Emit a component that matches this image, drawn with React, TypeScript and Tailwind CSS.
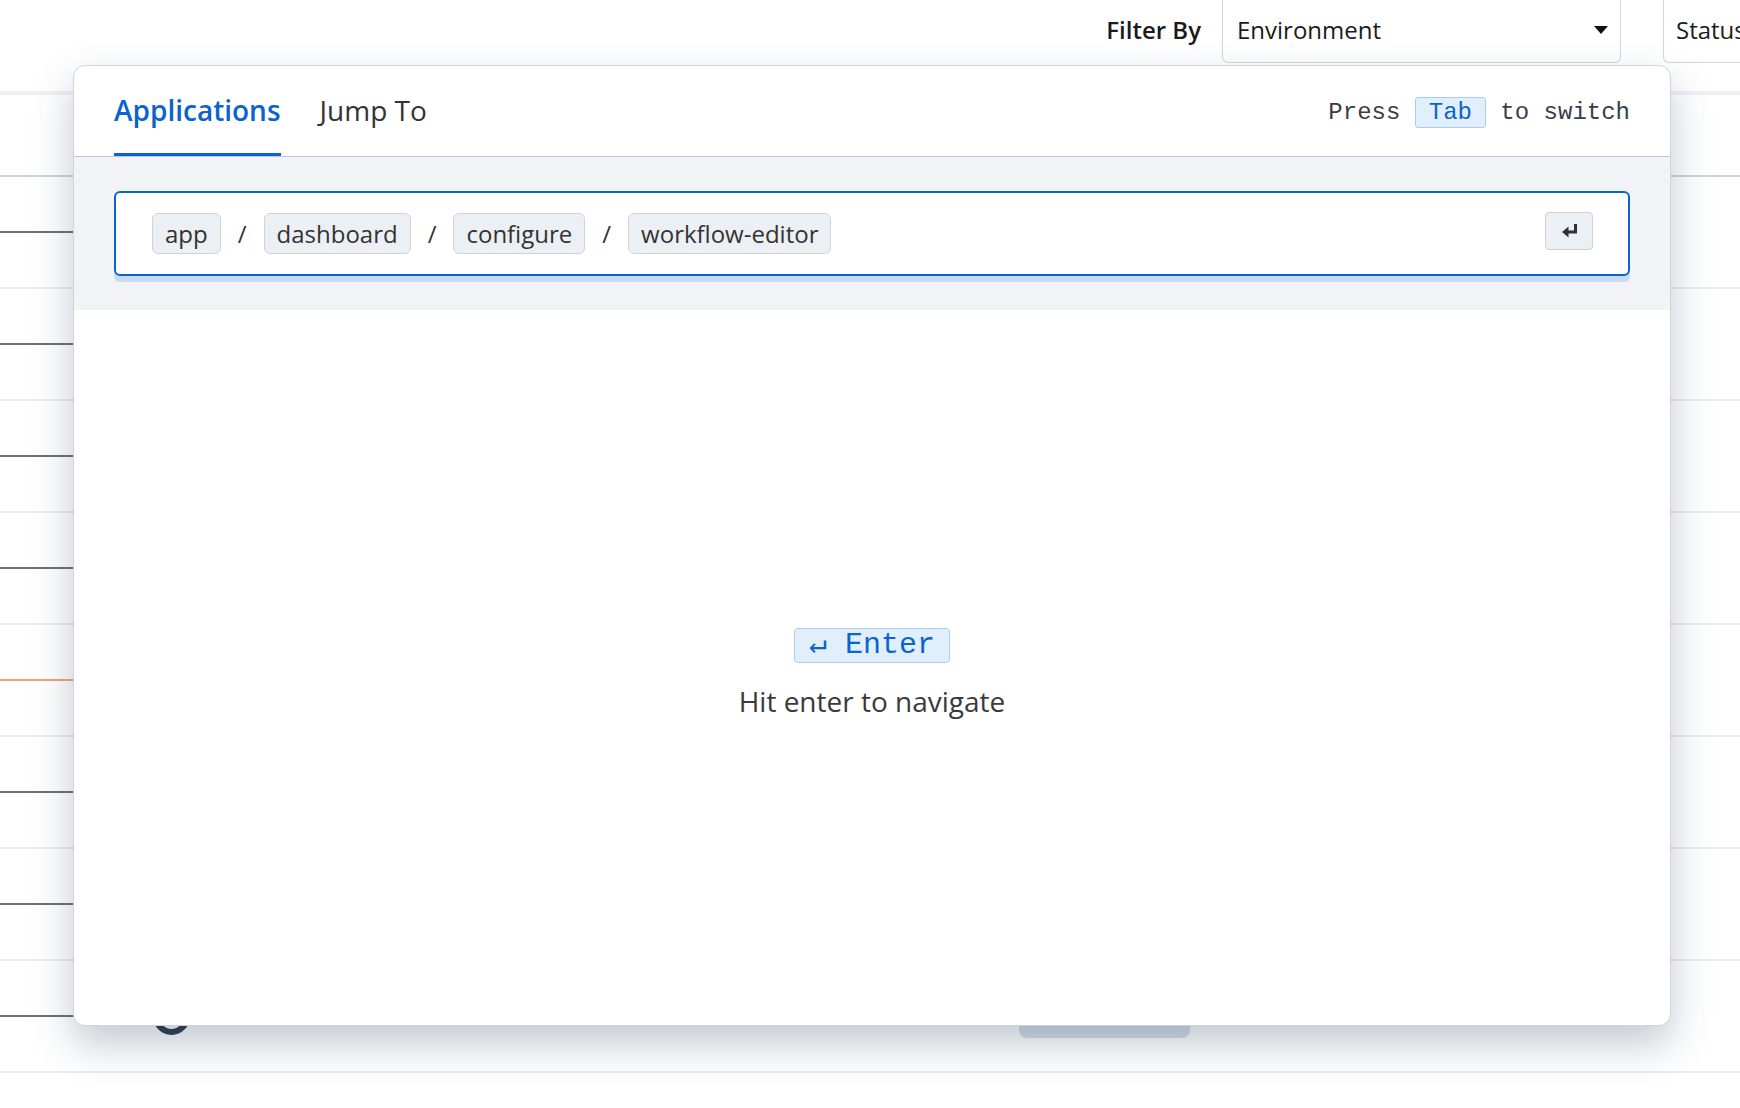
import React from "react"

const CRUMBS = ["app", "dashboard", "configure", "workflow-editor"]

const ROWS = [
  { line: "bg-[#6b7178]" },
  { line: "bg-[#6b7178]" },
  { line: "bg-[#6b7178]" },
  { line: "bg-[#6b7178]" },
  { line: "bg-[#f7a07f]" },
  { line: "bg-[#6b7178]" },
  { line: "bg-[#6b7178]" },
  { line: "bg-[#6b7178]" },
]

function ReturnIcon() {
  return (
    <svg width="17" height="14" viewBox="0 0 17 14" fill="none">
      <path d="M14.5 0 V8 H6" stroke="#2b333d" strokeWidth="3" />
      <path d="M7.5 2.5 L1 8 L7.5 13.5 Z" fill="#2b333d" />
    </svg>
  )
}

function Caret() {
  return (
    <svg width="14" height="8" viewBox="0 0 14 8">
      <path d="M0 0 H14 L7 8 Z" fill="#111" />
    </svg>
  )
}

function TopBar() {
  return (
    <div className="flex h-[63px] items-stretch justify-end">
      <div className="mr-[21px] self-center pb-[3px] text-[24px] font-semibold text-[#1b1b1b]">
        Filter By
      </div>
      <div className="flex w-[399px] items-center justify-between rounded-b-[6px] border-x border-b border-[#d3d7dd] pb-[3px] pl-[14px] pr-[12px]">
        <span className="text-[24px] text-[#1b1b1b]">Environment</span>
        <Caret />
      </div>
      <div className="ml-[42px] flex w-[77px] items-center rounded-bl-[6px] border-b border-l border-[#d3d7dd] pb-[3px] pl-[12px]">
        <span className="whitespace-nowrap text-[24px] text-[#1b1b1b]">Status</span>
      </div>
    </div>
  )
}

function Table() {
  return (
    <div>
      <div className="h-[28px]" />
      <div className="h-[4px] bg-[#eef1f4]" />
      <div className="h-[82px] border-b-2 border-[#d0d4da]" />
      {ROWS.map((r, i) => (
        <div key={i} className="flex h-[112px] items-center border-b-2 border-[#e9ecf0]">
          <div className="flex w-[140px] items-center">
            <div className={`h-[2px] w-full ${r.line}`} />
          </div>
          <div className="ml-[13px] h-[37px] w-[37px] rounded-full border-[6px] border-[#2e3d4f]" />
          <div className="ml-[829px] h-[44px] w-[171px] rounded-[8px] bg-[#d6dee8]" />
        </div>
      ))}
    </div>
  )
}

function Palette() {
  return (
    <div className="absolute left-[73px] top-[65px] flex h-[961px] w-[1598px] flex-col overflow-hidden rounded-[12px] border border-[#cfd4db] bg-white shadow-[0_18px_40px_rgba(38,58,90,0.28)]">
      {/* Tabs */}
      <div className="flex h-[91px] items-stretch justify-between border-b border-[#bdc7d5] px-10">
        <div className="flex items-end">
          <div className="border-b-[3px] border-[#0b63ce] py-6 text-[28px] font-semibold leading-[38px] text-[#0b63ce]">
            Applications
          </div>
          <div className="ml-[39px] border-b-[3px] border-transparent py-6 text-[28px] leading-[38px] text-[#333]">
            Jump To
          </div>
        </div>
        <div className="flex items-center whitespace-pre pt-[3px] font-['Liberation_Mono','DejaVu_Sans_Mono',monospace] text-[24px] text-[#383e45]">
          {"Press "}
          <span className="rounded-[3px] border border-[#a9cdf2] bg-[#e1effd] px-[13px] py-px leading-[27px] text-[#0b63ce]">
            Tab
          </span>
          {" to switch"}
        </div>
      </div>

      {/* Path input */}
      <div className="bg-[#f1f3f7] px-10 pb-[34px] pt-[34px]">
        <div className="flex h-[85px] items-center justify-between rounded-[6px] border-2 border-[#0b63ce] bg-white pl-[36px] pr-[35px] shadow-[0_6px_0_0_#c8daf2]">
          <div className="flex items-center gap-[17px]">
            {CRUMBS.map((c, i) => (
              <React.Fragment key={c}>
                {i > 0 && <span className="text-[24px] text-[#333]">/</span>}
                <span className="flex h-[41px] items-center rounded-[6px] border-[1.5px] border-[#cfd4db] bg-[#eceff4] px-[12px] text-[24px] text-[#333]">
                  {c}
                </span>
              </React.Fragment>
            ))}
          </div>
          <div className="mb-[5px] flex h-[38px] w-[48px] items-center justify-center rounded-[4px] border-[1.5px] border-[#cdd2d9] bg-[#eceff4]">
            <ReturnIcon />
          </div>
        </div>
      </div>

      {/* Empty state */}
      <div className="flex flex-1 flex-col items-center justify-center pt-[13px]">
        <span className="whitespace-pre rounded-[4px] border border-[#a9cdf2] bg-[#e1effd] px-[14px] py-px font-['Liberation_Mono','DejaVu_Sans_Mono',monospace] text-[30px] leading-[31px] text-[#0b63ce]">
          {"↵ Enter"}
        </span>
        <div className="mt-[19px] text-[28px] leading-[38px] text-[#3a3a3a]">
          Hit enter to navigate
        </div>
      </div>
    </div>
  )
}

export default function App() {
  return (
    <div className="relative h-[1108px] w-full overflow-hidden bg-white font-['Open_Sans',sans-serif]">
      <TopBar />
      <Table />
      <Palette />
    </div>
  )
}
